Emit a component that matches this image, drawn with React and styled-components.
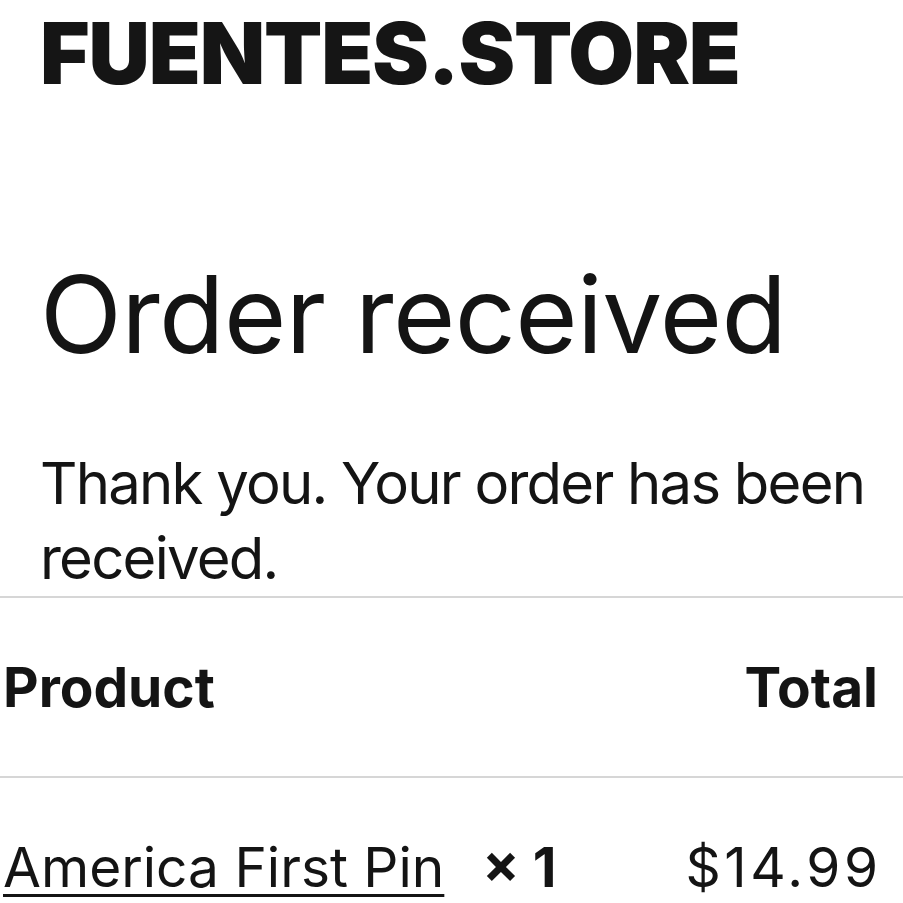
import React from 'react';
import styled, { createGlobalStyle } from 'styled-components';

const GlobalStyle = createGlobalStyle`
  html, body {
    margin: 0;
    padding: 0;
    background: #ffffff;
  }
  body {
    font-family: Inter, "Noto Sans", "Liberation Sans", sans-serif;
    color: #141414;
    overflow: hidden;
  }
`;

const Page = styled.div`
  width: 903px;
  height: 903px;
  overflow: hidden;
`;

const Intro = styled.section`
  padding: 11px 0 0 40px;
`;

const Logo = styled.div`
  font-size: 85px;
  line-height: 1;
  font-weight: 900;
  letter-spacing: -1.1px;
  color: #151515;
`;

const Heading = styled.h1`
  margin: 154px 0 0;
  font-size: 107px;
  line-height: 1.2;
  font-weight: 400;
  letter-spacing: -0.6px;
`;

const Message = styled.p`
  margin: 68px 0 0;
  font-size: 58px;
  line-height: 75px;
  font-weight: 400;
  letter-spacing: -1.75px;
`;

const Table = styled.div`
  display: flex;
  flex-direction: column;
`;

const Row = styled.div`
  display: flex;
  align-items: center;
  justify-content: space-between;
  height: 178px;
  padding: 0 25px 0 3px;
  border-top: 2px solid #d6d6d6;
`;

const Cell = styled.div`
  display: flex;
  align-items: baseline;
  gap: 38px;
  font-size: 55px;
  line-height: 1.2;
  font-weight: ${(p) => (p.$head ? 700 : 400)};
`;

const ProductLink = styled.a`
  color: inherit;
  text-decoration: underline;
  text-decoration-thickness: 3px;
  text-underline-offset: 7px;
`;

const Qty = styled.strong`
  font-weight: 700;
`;

const Price = styled.span`
  letter-spacing: 3.5px;
  margin-right: -3.5px;
`;

export default function App() {
  return (
    <Page>
      <GlobalStyle />
      <Intro>
        <Logo>FUENTES.STORE</Logo>
        <Heading>Order received</Heading>
        <Message>Thank you. Your order has been received.</Message>
      </Intro>
      <Table>
        <Row>
          <Cell $head>Product</Cell>
          <Cell $head>Total</Cell>
        </Row>
        <Row>
          <Cell>
            <ProductLink href="#">America First Pin</ProductLink>
            <Qty>× 1</Qty>
          </Cell>
          <Cell>
            <Price>$14.99</Price>
          </Cell>
        </Row>
      </Table>
    </Page>
  );
}
